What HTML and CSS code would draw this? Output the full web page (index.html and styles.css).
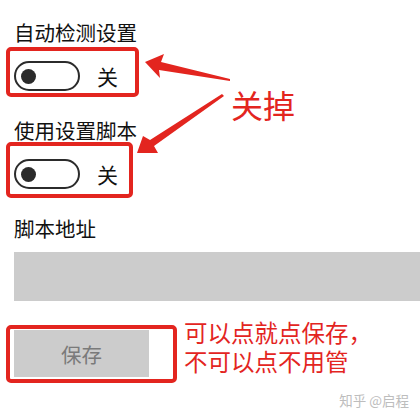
FILE: index.html
```html
<!DOCTYPE html>
<html lang="zh-CN">
<head>
    <meta charset="UTF-8">
    <meta name="viewport" content="width=device-width, initial-scale=1.0">
    <title>代理设置</title>
    <link rel="stylesheet" href="styles.css">
</head>
<body>
    <div class="settings">
        <div class="label">自动检测设置</div>
        <div class="switch-row">
            <span class="switch"></span>
            <span class="state">关</span>
        </div>
        <div class="label">使用设置脚本</div>
        <div class="switch-row">
            <span class="switch"></span>
            <span class="state">关</span>
        </div>
        <div class="label">脚本地址</div>
        <div class="input"></div>
        <div class="save-row">
            <button class="save" disabled>保存</button>
            <p class="note">可以点就点保存，<br>不可以点不用管</p>
        </div>
    </div>

    <!-- 红框和箭头标注 -->
    <svg class="marks" width="420" height="420" viewBox="0 0 420 420">
        <g fill="none" stroke="#e3251f" stroke-width="4">
            <rect x="8" y="49" width="129" height="46" rx="3"/>
            <rect x="8" y="144" width="123" height="52" rx="3"/>
            <rect x="8" y="327" width="167" height="54" rx="3"/>
        </g>
        <g fill="#e3251f">
            <path d="M145,62 L164,54 L161,62 L230,79 L230,81 L159,70 L160,78 Z"/>
            <path d="M137,153 L143,136 L150,140 L222,94 L224,96 L154,146 L158,153 Z"/>
        </g>
    </svg>
    <div class="tag">关掉</div>
    <div class="watermark">知乎 @启程</div>
</body>
</html>
```

FILE: styles.css
```css
*{
    margin: 0;
    padding: 0;
    box-sizing: border-box;
}
body{
    position: relative;
    width: 420px;
    height: 420px;
    overflow: hidden;
    background-color: #fff;
    color: #111;
    font-family: "Noto Sans CJK SC", "Noto Sans", sans-serif;
}
.settings{
    padding: 18px 0 0 14px;
}
.label{
    font-size: 20.5px;
    line-height: 28px;
}
.switch-row{
    display: flex;
    align-items: center;
    height: 30px;
    margin: 15px 0 25px;
}
.switch{
    display: flex;
    align-items: center;
    width: 66px;
    height: 30px;
    padding-left: 5px;
    border: 2.5px solid #2b2b2b;
    border-radius: 15px;
}
.switch::before{
    content: "";
    width: 15px;
    height: 15px;
    border-radius: 50%;
    background-color: #2b2b2b;
}
.state{
    margin-left: 17px;
    font-size: 21px;
    line-height: 30px;
}
.input{
    width: 420px;
    height: 49px;
    margin-top: 10px;
    background-color: #ccc;
}
.save-row{
    display: flex;
    align-items: flex-start;
    margin-top: 29px;
}
.save{
    width: 135px;
    height: 47px;
    border: none;
    background-color: #ccc;
    color: #7a7a7a;
    font-family: inherit;
    font-size: 20.5px;
}
.note{
    margin: -12px 0 0 35px;
    color: #e3251f;
    font-size: 23.5px;
    line-height: 29px;
}
.marks{
    position: absolute;
    top: 0;
    left: 0;
    pointer-events: none;
}
.tag{
    position: absolute;
    top: 84px;
    left: 231px;
    color: #e3251f;
    font-size: 32px;
    line-height: 40px;
}
.watermark{
    position: absolute;
    top: 390px;
    right: 11px;
    color: #bdbdbd;
    font-size: 13.5px;
    line-height: 20px;
}
```
